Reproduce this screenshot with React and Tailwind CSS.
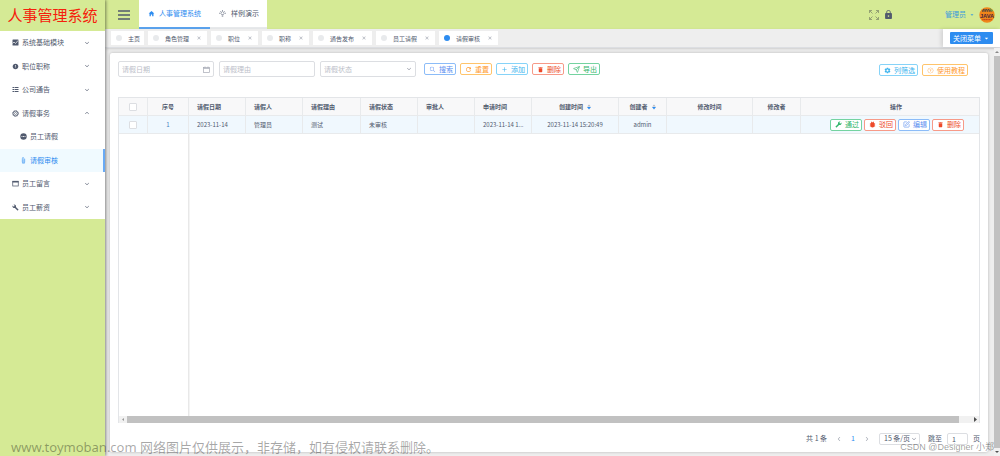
import React from "react";
import {
  IoMdHome, IoIosSearch, IoMdRefresh, IoMdAdd, IoMdTrash, IoMdSettings,
  IoIosHelpCircleOutline, IoMdBuild, IoMdBug, IoIosArrowDown, IoIosArrowUp, IoIosArrowBack, IoIosArrowForward,
  IoMdArrowDropdown, IoMdLock, IoMdAlert, IoMdAttach, IoIosClose,
} from "react-icons/io";
import { Send, SquarePen } from "lucide-react";

function GridIcon({ className }) {
  return (
    <svg viewBox="0 0 14 14" className={className} fill="currentColor" aria-hidden="true">
      {[2, 6, 10].map((y) => (
        <g key={y}>
          <rect x="1" y={y} width="3" height="2" />
          <rect x="5" y={y} width="8" height="2" />
        </g>
      ))}
    </svg>
  );
}

function DotsIcon({ className }) {
  return (
    <svg viewBox="0 0 12 12" className={className} aria-hidden="true">
      <circle cx="6" cy="6" r="5.5" fill="currentColor" />
      <path d="M2.6 6h1.6M5.2 6h1.6M7.8 6h1.6" stroke="#fff" strokeWidth="1.6" />
    </svg>
  );
}

function ChartIcon({ className }) {
  return (
    <svg viewBox="0 0 14 14" className={className} aria-hidden="true">
      <rect x="1" y="1" width="12" height="12" rx="1" fill="currentColor" />
      <path d="M1 9l3-3 3 3 5-6" fill="none" stroke="#fff" strokeWidth="1.4" />
    </svg>
  );
}

function RingIcon({ className }) {
  return (
    <svg viewBox="0 0 14 14" className={className} fill="none" stroke="currentColor" aria-hidden="true">
      <circle cx="7" cy="7" r="5" strokeWidth="1.8" />
      <circle cx="7" cy="7" r="2" strokeWidth="1.2" />
      <circle cx="7" cy="7" r="6" strokeWidth="1.4" strokeDasharray="2 2.7" />
    </svg>
  );
}

function WindowIcon({ className }) {
  return (
    <svg viewBox="0 0 14 14" className={className} fill="none" stroke="currentColor" aria-hidden="true">
      <rect x="1.500" y="2.500" width="11" height="9.500" strokeWidth="1.500" />
      <path d="M1 3.500h12" strokeWidth="3" />
    </svg>
  );
}

function CalendarIcon({ className }) {
  return (
    <svg viewBox="0 0 14 14" className={className} fill="none" stroke="currentColor" strokeWidth="1.400" aria-hidden="true">
      <rect x="1" y="3" width="12" height="10" />
      <path d="M4 1v3M10 1v3M1 5h12" />
    </svg>
  );
}

function BulbIcon({ className }) {
  return (
    <svg viewBox="0 0 14 14" className={className} fill="none" stroke="currentColor" strokeWidth="1.2" aria-hidden="true">
      <path d="M5.500 10V9a3 3 0 1 1 3 0v1zM5.500 12.500h3M7 0v2M0 6.500h2M12 6.500h2M2 2l1.400 1.400M12 2l-1.400 1.400" />
    </svg>
  );
}

function WrenchIcon({ className }) {
  return <IoMdBuild className={className + " -scale-x-100"} />;
}

function ExpandIcon({ className }) {
  return (
    <svg viewBox="0 0 20 20" className={className} fill="none" stroke="currentColor" strokeWidth="1.5" aria-hidden="true">
      <path d="M1 6V1h5M1 1l6 6M14 1h5v5M19 1l-6 6M1 14v5h5M1 19l6-6M14 19h5v-5M19 19l-6-6" />
    </svg>
  );
}

function Avatar({ className }) {
  return (
    <svg viewBox="0 0 48 48" className={className} role="img" aria-label="JAVA">
      <circle cx="24" cy="24" r="23" fill="#f08519" />
      <path d="M9 12h30M12 8h24" stroke="#5a4b3c" strokeWidth="4" strokeDasharray="5 2" />
      <path d="M33 5l8 8" stroke="#6f9b45" strokeWidth="4" />
      <text x="24" y="32" textAnchor="middle" fontSize="17" fontWeight="bold" fontFamily="Liberation Sans, sans-serif" fill="#46253c">JAVA</text>
      <path d="M10 38h28" stroke="#b63a20" strokeWidth="3" strokeDasharray="4 1" />
    </svg>
  );
}

const menu = [
  { label: "系统基础模块", Icon: ChartIcon },
  { label: "职位职称", Icon: IoMdAlert },
  { label: "公司通告", Icon: GridIcon },
  { label: "请假事务", Icon: RingIcon, open: true },
  { label: "员工请假", Icon: DotsIcon, child: true },
  { label: "请假审核", Icon: IoMdAttach, child: true, active: true },
  { label: "员工留言", Icon: WindowIcon },
  { label: "员工薪资", Icon: IoMdBuild },
];

const tabs = ["主页", "角色管理", "职位", "职称", "通告发布", "员工请假", "请假审核"];

const tones = {
  indigo: "border-[#8cbcf8] text-[#5b8ff0]",
  orange: "border-[#ffc46b] text-[#ff9a2e]",
  cyan: "border-[#86d3f8] text-[#3db4ee]",
  red: "border-[#f79a88] text-[#ed4a2a]",
  green: "border-[#74d3a0] text-[#32b66b]",
};

function Btn({ tone, Icon, children }) {
  return (
    <button type="button" className={"flex h-3 shrink-0 items-center gap-[3px] whitespace-nowrap rounded-[2px] border bg-white pl-1 pr-[2px] text-[7px] leading-none " + tones[tone]}>
      <Icon className="size-[7px]" />
      <span>{children}</span>
    </button>
  );
}

function Sort() {
  return (
    <svg viewBox="0 0 8 12" className="h-[6px] w-1" aria-hidden="true">
      <path d="M4 1l3.5 4h-7z" fill="#b5b9c2" />
      <path d="M4 11l4-5H0z" fill="#2d8cf0" />
    </svg>
  );
}

const columns = [
  { w: "w-[57px]", label: "请假日期", value: "2023-11-14" },
  { w: "w-[57px]", label: "请假人", value: "管理员" },
  { w: "w-[58px]", label: "请假理由", value: "测试" },
  { w: "w-[57px]", label: "请假状态", value: "未审核" },
  { w: "w-[57px]", label: "审批人", value: "" },
  { w: "w-[57px]", label: "申请时间", value: "2023-11-14 1..." },
  { w: "w-[87px]", label: "创建时间", value: "2023-11-14 15:20:49", sort: true, center: true },
  { w: "w-[48px]", label: "创建者", value: "admin", sort: true, center: true },
  { w: "w-[86px]", label: "修改时间", value: "", center: true },
  { w: "w-[48px]", label: "修改者", value: "", center: true },
];

const cell = "border-b border-r border-[#e8eaec] p-0";

function Tick({ label }) {
  return <input type="checkbox" aria-label={label} className="mx-auto block size-2 appearance-none rounded-[1px] border border-[#dcdee2] bg-white" />;
}

function Sidebar() {
  return (
    <aside className="z-10 w-[105px] shrink-0 bg-[#d5ea95] shadow-[1px_0_3px_rgba(0,0,0,0.45)]">
      <h1 className="flex h-[31px] items-center justify-center text-[15px] font-normal text-[#f5200c]">人事管理系统</h1>
      <nav className="grid h-[188px] grid-rows-8 bg-white">
        {menu.map(({ label, Icon, open, child, active }) => (
          <a
            key={label}
            href="#"
            className={
              "flex items-center gap-[3px] text-[7px] leading-none " +
              (child ? "pl-5 " : "pl-3 ") +
              (active ? "border-r-2 border-[#69aaf5] bg-[#f0faff] text-[#2d8cf0]" : "text-[#515a6e]")
            }
          >
            <Icon className="size-[7px]" />
            <span className="flex-1">{label}</span>
            {!child && (open ? <IoIosArrowUp className="mr-[15px] size-[6px]" /> : <IoIosArrowDown className="mr-[15px] size-[6px]" />)}
          </a>
        ))}
      </nav>
    </aside>
  );
}

function Header() {
  return (
    <header className="flex h-[29px] items-stretch bg-[#d5ea95] text-[7px]">
      <button type="button" aria-label="菜单" className="flex w-[34px] items-center justify-center pl-1 text-[#515a6e]">
        <svg viewBox="0 0 12 10" className="h-[10px] w-3" stroke="currentColor" strokeWidth="1.4" aria-hidden="true">
          <path d="M0 1h12M0 5h12M0 9h12" />
        </svg>
      </button>
      <nav className="flex bg-white">
        <a href="#" className="flex w-[71px] items-center justify-center gap-1 border-b-2 border-[#5ba3ee] text-[#2d8cf0]">
          <IoMdHome className="size-[7px]" />人事管理系统
        </a>
        <a href="#" className="flex w-[57px] items-center gap-[5px] border-b-2 border-[#e8eaec] pl-[9px] text-[#515a6e]">
          <BulbIcon className="size-[7px]" />样例演示
        </a>
      </nav>
      <div className="ml-auto flex items-center pr-[5px]">
        <button type="button" aria-label="全屏"><ExpandIcon className="size-[10px] text-[#7f8a68]" /></button>
        <button type="button" aria-label="锁屏" className="ml-1 text-[#515a6e]"><IoMdLock className="size-[11px]" /></button>
        <button type="button" className="ml-[51px] flex items-center gap-[3px] text-[#3b9bdc]">
          管理员<IoMdArrowDropdown className="size-[6px]" />
        </button>
        <Avatar className="ml-1 size-4" />
      </div>
    </header>
  );
}

function TabBar() {
  return (
    <div className="flex h-[19px] items-center gap-1 border-b border-[#dcdee2] bg-[#eeeeee] pl-[6px] shadow-sm">
      {tabs.map((t, i) => (
        <div key={t} className="flex h-[14px] items-center gap-[6px] bg-white pl-[5px] pr-1 text-[6px] text-[#515a6e]">
          <span className={"size-[6px] rounded-full " + (i === 6 ? "bg-[#2d8cf0]" : "bg-[#e8eaec]")} />
          <a href="#">{t}</a>
          {i > 0 && <button type="button" aria-label={"关闭" + t} className="text-[#9a9fab]"><IoIosClose className="size-[8px]" /></button>}
        </div>
      ))}
      <div className="ml-auto flex h-full w-[57px] items-center justify-center bg-white shadow-[-2px_0_4px_rgba(0,0,0,0.12)]">
        <button type="button" className="flex h-3 items-center gap-[2px] rounded-[1px] bg-[#2d8cf0] px-[3px] text-[7px] leading-none text-white">
          关闭菜单<IoMdArrowDropdown className="size-[7px]" />
        </button>
      </div>
    </div>
  );
}

function Filters() {
  const box = "h-4 w-[96px] rounded-[2px] border border-[#dcdee2] bg-white px-[3px] text-[7px] leading-none placeholder:text-[#bbbec8]";
  return (
    <form className="flex items-center gap-[5px]">
      <label className="relative flex items-center">
        <input aria-label="请假日期" placeholder="请假日期" className={box} />
        <CalendarIcon className="absolute right-1 size-[7px] text-[#a5a9b4]" />
      </label>
      <input aria-label="请假理由" placeholder="请假理由" className={box} />
      <label className="relative flex items-center">
        <select aria-label="请假状态" defaultValue="" className={box + " appearance-none text-[#bbbec8]"}>
          <option value="">请假状态</option>
        </select>
        <IoIosArrowDown className="absolute right-1 size-[6px] text-[#808695]" />
      </label>
      <div className="ml-[3px] flex gap-1">
        <Btn tone="indigo" Icon={IoIosSearch}>搜索</Btn>
        <Btn tone="orange" Icon={IoMdRefresh}>重置</Btn>
        <Btn tone="cyan" Icon={IoMdAdd}>添加</Btn>
        <Btn tone="red" Icon={IoMdTrash}>删除</Btn>
        <Btn tone="green" Icon={Send}>导出</Btn>
      </div>
      <div className="ml-auto mr-3 flex gap-1 pt-[2px]">
        <Btn tone="cyan" Icon={IoMdSettings}>列筛选</Btn>
        <Btn tone="orange" Icon={IoIosHelpCircleOutline}>使用教程</Btn>
      </div>
    </form>
  );
}

function DataTable() {
  return (
    <div className="mt-5 flex flex-1 flex-col border border-b-0 border-[#e3e5e8]">
      <table className="w-full table-fixed border-separate border-spacing-0 text-left text-[6px] leading-none text-[#515a6e]">
        <thead>
          <tr className="h-[18px] bg-[#f8f8f9]">
            <th className={cell + " w-[29px]"}><Tick label="全选" /></th>
            <th className={cell + " w-[41px] text-center"}>序号</th>
            {columns.map((c) => (
              <th key={c.label} className={cell + " " + c.w + (c.center ? "" : " pl-2")}>
                <span className={"flex items-center gap-1" + (c.center ? " justify-center" : "")}>
                  {c.label}{c.sort && <Sort />}
                </span>
              </th>
            ))}
            <th className={cell + " border-r-0 pl-3 text-center"}>操作</th>
          </tr>
        </thead>
        <tbody>
          <tr className="h-[18px] bg-[#f0f8fe]">
            <td className={cell}><Tick label="选择第1行" /></td>
            <td className={cell + " text-center text-[#3f7fc0]"}>1</td>
            {columns.map((c) => (
              <td key={c.label} className={cell + " whitespace-nowrap" + (c.center ? " text-center" : " pl-2")}>{c.value}</td>
            ))}
            <td className={cell + " border-r-0"}>
              <div className="flex justify-end gap-[2px] pr-[15px]">
                <Btn tone="green" Icon={WrenchIcon}>通过</Btn>
                <Btn tone="red" Icon={IoMdBug}>驳回</Btn>
                <Btn tone="indigo" Icon={SquarePen}>编辑</Btn>
                <Btn tone="red" Icon={IoMdTrash}>删除</Btn>
              </div>
            </td>
          </tr>
        </tbody>
      </table>
      <div className="ml-[69px] w-[2px] flex-1 border-l border-[#e8e8e8] bg-[#f4f4f4]" />
      <div className="flex h-[7px] items-center bg-[#f1f1f1]">
        <svg viewBox="0 0 8 7" className="h-[7px] w-2" fill="#999" aria-hidden="true"><path d="M5 2v3L3 3.5z" /></svg>
        <div className="h-full flex-1 bg-[#c1c1c1]" />
        <svg viewBox="0 0 20 7" className="h-[7px] w-5" fill="#505050" aria-hidden="true"><path d="M15 1v5l3-2.500z" /></svg>
      </div>
    </div>
  );
}

function Pager() {
  return (
    <footer className="flex h-[29px] items-center justify-end pt-[2px] text-[7px] leading-none text-[#515a6e]">
      <span>共 1 条</span>
      <button type="button" aria-label="上一页" className="ml-2 p-px text-[#a0a5b0]"><IoIosArrowBack className="size-[6px]" /></button>
      <button type="button" className="mx-2 text-[#2d8cf0]">1</button>
      <button type="button" aria-label="下一页" className="p-px text-[#a0a5b0]"><IoIosArrowForward className="size-[6px]" /></button>
      <label className="relative ml-2 flex items-center">
        <select aria-label="每页条数" className="h-3 w-[41px] appearance-none rounded-[2px] border border-[#dcdee2] bg-white pl-1 text-[7px] leading-none">
          <option>15 条/页</option>
        </select>
        <IoIosArrowDown className="absolute right-[3px] size-[6px] text-[#808695]" />
      </label>
      <label className="ml-2 flex items-center gap-[5px]">
        跳至
        <input defaultValue="1" className="h-3 w-[21px] rounded-[2px] border border-[#dcdee2] bg-white px-1 text-[7px] leading-none" />
        <span>页</span>
      </label>
    </footer>
  );
}

export default function App() {
  return (
    <div className="relative flex min-h-screen overflow-hidden bg-[#eeeeee] font-['Noto_Sans_CJK_SC','Noto_Sans',sans-serif]">
      <Sidebar />
      <div className="flex min-w-0 flex-1 flex-col">
        <Header />
        <TabBar />
        <div className="flex flex-1">
          <main className="mb-1 ml-[5px] mr-[6px] mt-[5px] flex min-w-0 flex-1 flex-col rounded-[2px] bg-white px-2 pt-2 shadow-[0_0_3px_rgba(0,0,0,0.25)]">
            <Filters />
            <DataTable />
            <Pager />
          </main>
          <div className="flex w-[6px] flex-col bg-[#f1f1f1]">
            <svg viewBox="0 0 6 8" className="h-2 w-[6px]" fill="#888" aria-hidden="true"><path d="M1 5h4L3 3z" /></svg>
            <div className="flex-1 bg-[#c1c1c1]" />
            <svg viewBox="0 0 6 8" className="h-2 w-[6px]" fill="#505050" aria-hidden="true"><path d="M1 3h4L3 5z" /></svg>
          </div>
        </div>
      </div>
      <p className="pointer-events-none absolute bottom-0 left-[11px] z-20 font-['Noto_Sans','Noto_Sans_CJK_SC',sans-serif] text-[13px] leading-[18px] text-black/35">
        www.toymoban.com 网络图片仅供展示，非存储，如有侵权请联系删除。
      </p>
      <p className="pointer-events-none absolute bottom-0 right-[6px] z-20 font-['Liberation_Sans','Noto_Sans_CJK_SC',sans-serif] text-[9px] leading-[18px] text-black/40">
        CSDN @Designer 小郑
      </p>
    </div>
  );
}
